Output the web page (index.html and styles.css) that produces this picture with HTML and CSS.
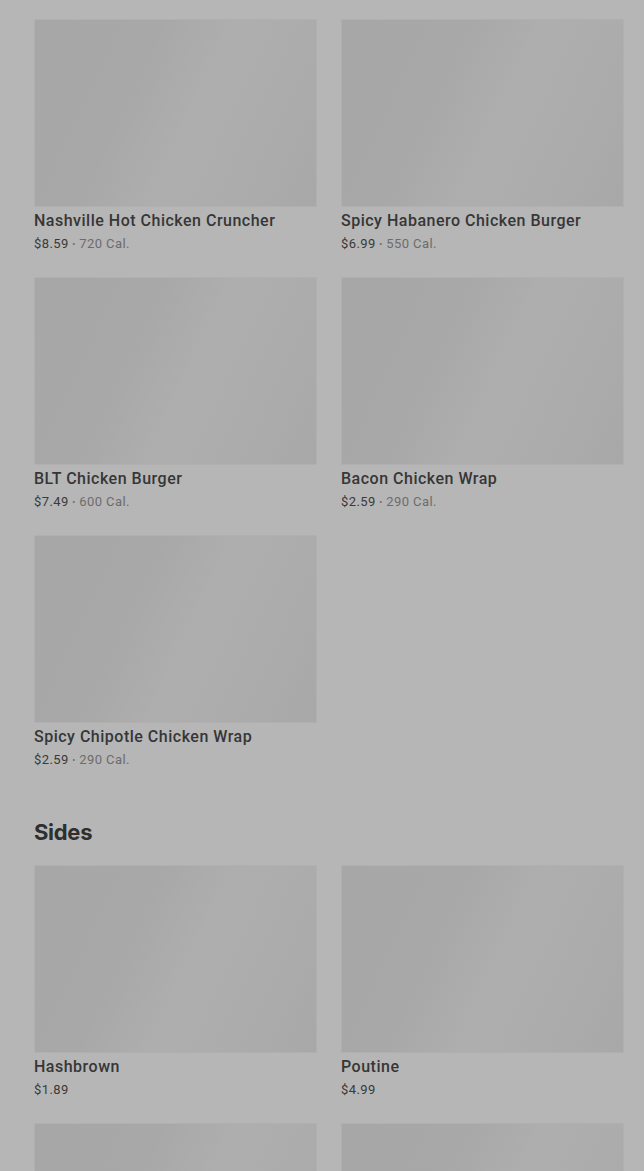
FILE: index.html
```html
<!DOCTYPE html>
<html lang="en">
<head>
    <meta charset="UTF-8">
    <meta name="viewport" content="width=device-width, initial-scale=1.0">
    <title>Menu</title>
    <link rel="stylesheet" href="styles.css">
</head>
<body>
    <div class="menu">
        <div class="grid">
            <div class="item">
                <div class="thumb"></div>
                <div class="name">Nashville Hot Chicken Cruncher</div>
                <div class="meta">$8.59 <span class="dot">•</span> <span class="cal">720 Cal.</span></div>
            </div>
            <div class="item">
                <div class="thumb"></div>
                <div class="name">Spicy Habanero Chicken Burger</div>
                <div class="meta">$6.99 <span class="dot">•</span> <span class="cal">550 Cal.</span></div>
            </div>
            <div class="item">
                <div class="thumb"></div>
                <div class="name">BLT Chicken Burger</div>
                <div class="meta">$7.49 <span class="dot">•</span> <span class="cal">600 Cal.</span></div>
            </div>
            <div class="item">
                <div class="thumb"></div>
                <div class="name">Bacon Chicken Wrap</div>
                <div class="meta">$2.59 <span class="dot">•</span> <span class="cal">290 Cal.</span></div>
            </div>
            <div class="item">
                <div class="thumb"></div>
                <div class="name">Spicy Chipotle Chicken Wrap</div>
                <div class="meta">$2.59 <span class="dot">•</span> <span class="cal">290 Cal.</span></div>
            </div>
        </div>

        <h2 class="section-title">Sides</h2>

        <div class="grid">
            <div class="item">
                <div class="thumb"></div>
                <div class="name">Hashbrown</div>
                <div class="meta">$1.89</div>
            </div>
            <div class="item">
                <div class="thumb"></div>
                <div class="name">Poutine</div>
                <div class="meta">$4.99</div>
            </div>
            <div class="item">
                <div class="thumb"></div>
                <div class="name">&nbsp;</div>
                <div class="meta">&nbsp;</div>
            </div>
            <div class="item">
                <div class="thumb"></div>
                <div class="name">&nbsp;</div>
                <div class="meta">&nbsp;</div>
            </div>
        </div>
    </div>
</body>
</html>
```

FILE: styles.css
```css
html, body {
    height: 100%;
    overflow: hidden;
}
body {
    margin: 0;
    background-color: #b6b6b6;
    font-family: Roboto, "Liberation Sans", sans-serif;
    color: #303030;
}
.menu {
    padding: 19px 20px 0 34px;
}
.grid {
    display: grid;
    grid-template-columns: 283px 283px;
    column-gap: 24px;
    row-gap: 23px;
}
.thumb {
    height: 186px;
    border: 1px solid #b0b0b0;
    background: linear-gradient(115deg, #a7a7a7 0%, #a8a8a8 35%, #aeaeae 55%, #adadad 70%, #a8a8a8 100%);
}
.name {
    margin-top: 4px;
    height: 20px;
    font-size: 16px;
    line-height: 20px;
    font-weight: 500;
    letter-spacing: 0.5px;
    color: #363636;
    white-space: nowrap;
}
.meta {
    margin-top: 3px;
    height: 20px;
    font-size: 13px;
    line-height: 20px;
    letter-spacing: 0.4px;
    color: #3a3a3a;
}
.dot {
    color: #6a6a6a;
    font-size: 9px;
    line-height: 0;
    vertical-align: 1px;
}
.cal {
    color: #6c6c6c;
}
.section-title {
    margin: 48px 0 19px;
    height: 28px;
    font-family: Inter, "Liberation Sans", sans-serif;
    font-size: 22px;
    line-height: 28px;
    font-weight: 700;
    color: #2f2f2f;
    letter-spacing: -0.3px;
}
```
